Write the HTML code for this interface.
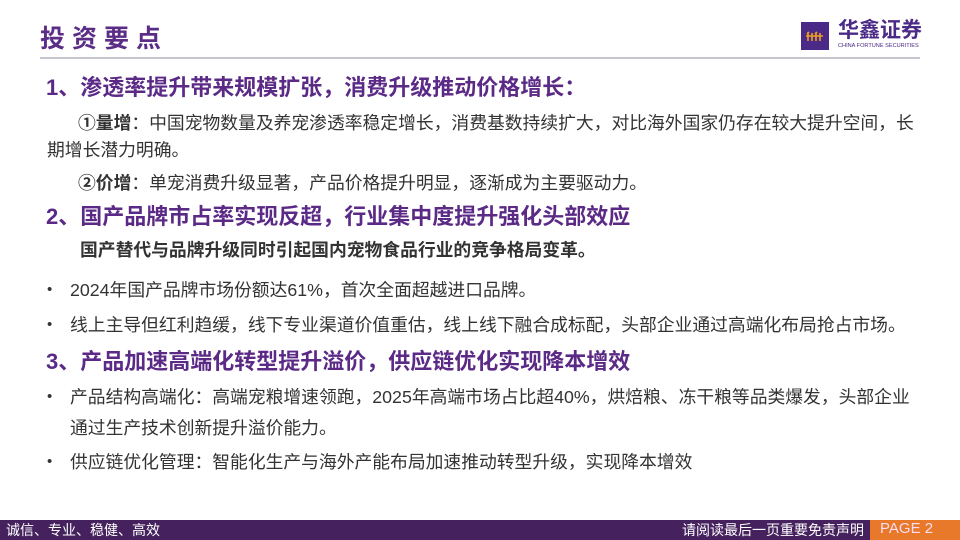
<!DOCTYPE html>
<html><head><meta charset="utf-8"><style>
*{margin:0;padding:0;box-sizing:border-box}
body{width:960px;height:540px;position:relative;background:#fff;font-family:"Liberation Sans","Noto Sans CJK SC",sans-serif;color:#333;overflow:hidden}
.a{position:absolute;white-space:nowrap}
.t{left:40px;top:24px;font-size:25px;line-height:30px;font-weight:bold;color:#5b2d86;letter-spacing:7px}
.hr{left:40px;top:57px;width:880px;height:2px;background:#c8c6d0}
.h{font-size:22px;line-height:24px;font-weight:bold;color:#5b2a86;left:46px}
.p{font-size:17.8px;line-height:20px;color:#333}
.b{font-weight:bold;color:#333}
.dot{position:absolute;left:47px;font-size:15px;line-height:20px}
</style></head><body>
<div class="a t">投资要点</div>
<div class="a hr"></div>
<div class="a" style="left:801px;top:22px;width:28px;height:28px;background:#4a2a86"><svg width="28" height="28"><g stroke="#f0a020" stroke-width="1.6" fill="none"><path d="M7 11v8M11 11v8M15 11v8M19 11v8M5 14h17M6 12l2-2M14 12l2-2"/></g></svg></div>
<div class="a" style="left:838px;top:19px;font-size:21px;line-height:24px;font-weight:bold;color:#4a2a86">华鑫证券</div>
<div class="a" style="left:838px;top:43px;font-size:5.6px;line-height:7px;color:#4a2a86">CHINA FORTUNE SECURITIES</div>

<div class="a h" style="top:76px">1、渗透率提升带来规模扩张，消费升级推动价格增长：</div>
<div class="a p" style="left:78px;top:113px"><span class="b">①量增</span>：中国宠物数量及养宠渗透率稳定增长，消费基数持续扩大，对比海外国家仍存在较大提升空间，长</div>
<div class="a p" style="left:47px;top:140px">期增长潜力明确。</div>
<div class="a p" style="left:78px;top:173px"><span class="b">②价增</span>：单宠消费升级显著，产品价格提升明显，逐渐成为主要驱动力。</div>
<div class="a h" style="top:205px">2、国产品牌市占率实现反超，行业集中度提升强化头部效应</div>
<div class="a p b" style="left:80px;top:240px">国产替代与品牌升级同时引起国内宠物食品行业的竞争格局变革。</div>
<div class="dot" style="top:280px">•</div><div class="a p" style="left:70px;top:280px">2024年国产品牌市场份额达61%，首次全面超越进口品牌。</div>
<div class="dot" style="top:315px">•</div><div class="a p" style="left:70px;top:315px">线上主导但红利趋缓，线下专业渠道价值重估，线上线下融合成标配，头部企业通过高端化布局抢占市场。</div>
<div class="a h" style="top:350px">3、产品加速高端化转型提升溢价，供应链优化实现降本增效</div>
<div class="dot" style="top:387px">•</div><div class="a p" style="left:70px;top:387px">产品结构高端化：高端宠粮增速领跑，2025年高端市场占比超40%，烘焙粮、冻干粮等品类爆发，头部企业</div>
<div class="a p" style="left:70px;top:418px">通过生产技术创新提升溢价能力。</div>
<div class="dot" style="top:452px">•</div><div class="a p" style="left:70px;top:452px">供应链优化管理：智能化生产与海外产能布局加速推动转型升级，实现降本增效</div>

<div class="a" style="left:0;top:520px;width:960px;height:20px;background:#45215e"></div>
<div class="a" style="left:870px;top:520px;width:90px;height:20px;background:#e8782a"></div>
<div class="a" style="left:6px;top:521px;font-size:14px;line-height:18px;color:#fff">诚信、专业、稳健、高效</div>
<div class="a" style="left:682px;top:521px;font-size:14px;line-height:18px;color:#fff">请阅读最后一页重要免责声明</div>
<div class="a" style="left:880px;top:520px;font-size:15px;line-height:18px;color:#fde">PAGE 2</div>
</body></html>
